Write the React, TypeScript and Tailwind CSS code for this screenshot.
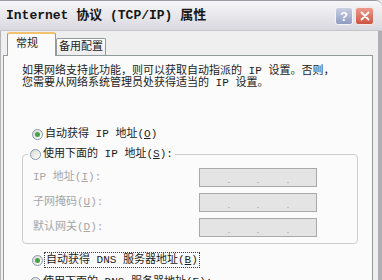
import React from "react";

function Radio({ checked }: { checked?: boolean }) {
  return (
    <span className="w-[11px] h-[11px] rounded-full border border-[#8797ad] bg-linear-to-br from-[#d9d9d4] to-white flex items-center justify-center shrink-0">
      {checked && <span className="w-[5px] h-[5px] rounded-full bg-[#45a245]" />}
    </span>
  );
}

function IpBox() {
  return (
    <div className="w-[118px] h-[19px] border border-[#a9a9a9] bg-[#e4e4e4] flex items-end pb-[3px]">
      <span className="flex-1" />
      <span className="w-[2px] h-[1px] bg-[#bdbdbd]" />
      <span className="flex-1" />
      <span className="w-[2px] h-[1px] bg-[#bdbdbd]" />
      <span className="flex-1" />
      <span className="w-[2px] h-[1px] bg-[#bdbdbd]" />
      <span className="flex-1" />
    </div>
  );
}

function Field({ label, acc }: { label: string; acc: string }) {
  return (
    <div className="flex items-center h-[19px] pl-[10px] mt-[6px] first:mt-[3px]">
      <span className="w-[166px] text-[#a6a6a6] whitespace-nowrap">
        {label}(<u>{acc}</u>):
      </span>
      <IpBox />
    </div>
  );
}

export default function App() {
  return (
    <div className="w-[382px] h-[280px] overflow-hidden flex flex-col bg-[#efeff0] text-[11px] text-[#1c1c1c] font-['Liberation_Mono','Noto_Sans_CJK_SC',monospace]">
      {/* title bar */}
      <div className="h-[31px] shrink-0 flex items-center justify-between pl-[6px] pr-[8px] bg-linear-to-b from-[#f7f7f9] to-[#d8d8df] border-t border-t-[#9a9aa2] border-b border-b-[#c4c4ca] rounded-tr-[6px]">
        <span className="font-bold text-[13px] text-[#161616] whitespace-nowrap">
          Internet 协议 (TCP/IP) 属性
        </span>
        <div className="flex items-center gap-[2px] mt-[1px]">
          <div className="w-[18px] h-[18px] rounded-[3px] border border-[#f4f4f8] bg-linear-to-b from-[#c9d0e2] to-[#8f9bc2] flex items-center justify-center text-white font-bold text-[13px] leading-none font-['Liberation_Sans',sans-serif]">
            ?
          </div>
          <div className="w-[19px] h-[18px] rounded-[3px] border border-[#f6e6e4] bg-linear-to-b from-[#ec9a8c] to-[#cc5444] flex items-center justify-center">
            <svg width="10" height="10" viewBox="0 0 10 10">
              <path d="M1.5 1.5 L8.5 8.5 M8.5 1.5 L1.5 8.5" stroke="white" strokeWidth="1.8" strokeLinecap="round" />
            </svg>
          </div>
        </div>
      </div>

      {/* body */}
      <div className="flex-1 flex flex-col border-l border-l-[#b4b4b8] border-r-[4px] border-r-[#b0b0b4] pl-[2px]">
        {/* tabs */}
        <div className="h-[24px] shrink-0 flex items-end pl-[4px]">
          <div className="relative z-10 h-[24px] mb-[-1px] w-[49px] pl-[8px] pt-[2px] border-x border-x-[#919b9c] border-t-[2px] border-t-[#f2c26e] rounded-t-[3px] bg-[#fbfbfb]">
            常规
          </div>
          <div className="h-[17px] w-[50px] flex items-center justify-center border-x border-t border-[#919b9c] rounded-t-[2px] bg-linear-to-b from-white to-[#ececec]">
            备用配置
          </div>
        </div>

        {/* panel */}
        <div className="w-[370px] flex-1 border border-[#919b9c] bg-[#fbfbfb] pl-[18px] pt-[10px]">
          <p className="leading-[11.5px] whitespace-nowrap">
            如果网络支持此功能，则可以获取自动指派的 IP 设置。否则，
            <br />
            您需要从网络系统管理员处获得适当的 IP 设置。
          </p>

          <div className="mt-[37px] h-[16px] flex items-center gap-[2px] ml-[10px]">
            <Radio checked />
            <span className="whitespace-nowrap">
              自动获得 IP 地址(<u>O</u>)
            </span>
          </div>

          <fieldset className="mt-[4px] w-[336px] border border-[#cdcdcd] rounded-[4px] pb-[6px]">
            <legend className="ml-[5px] px-[2px] h-[16px] flex items-center gap-[2px]">
              <Radio />
              <span className="whitespace-nowrap">
                使用下面的 IP 地址(<u>S</u>):
              </span>
            </legend>
            <Field label="IP 地址" acc="I" />
            <Field label="子网掩码" acc="U" />
            <Field label="默认网关" acc="D" />
          </fieldset>

          <div className="mt-[8px] h-[16px] flex items-center gap-[1px] ml-[10px]">
            <Radio checked />
            <span className="whitespace-nowrap border border-dotted border-[#3a3a3a] px-[1px] h-[16px] flex items-center">
              自动获得 DNS 服务器地址(<u>B</u>)
            </span>
          </div>

          <fieldset className="mt-[6px] w-[336px] border border-[#cdcdcd] rounded-[4px]">
            <legend className="ml-[5px] px-[2px] h-[16px] flex items-center gap-[2px]">
              <Radio />
              <span className="whitespace-nowrap">
                使用下面的 DNS 服务器地址(<u>E</u>):
              </span>
            </legend>
            <div className="h-[60px]" />
          </fieldset>
        </div>
      </div>
    </div>
  );
}
